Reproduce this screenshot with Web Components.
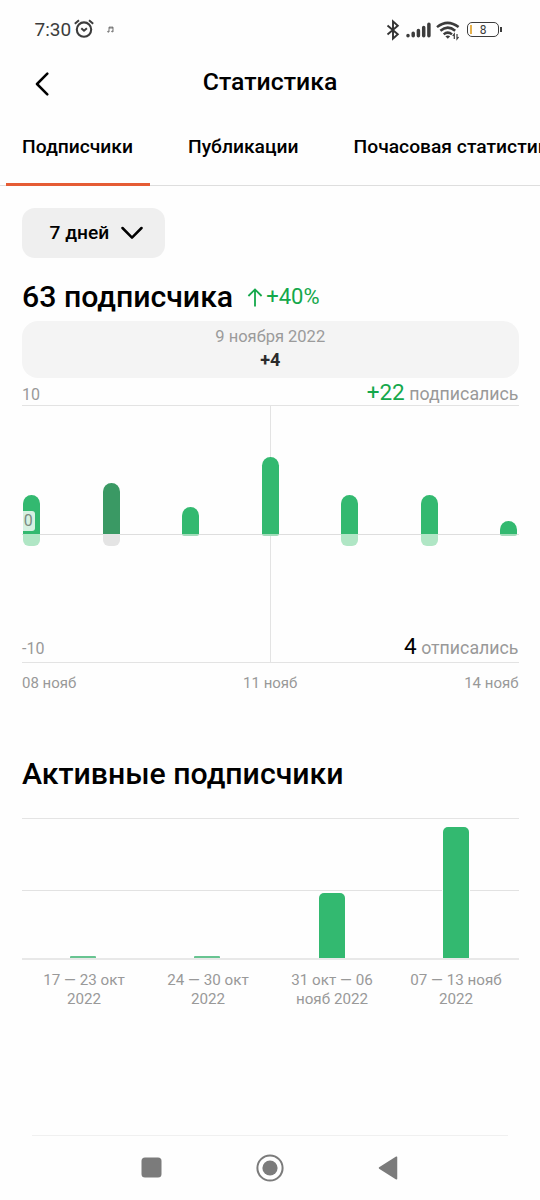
<!DOCTYPE html>
<html lang="ru">
<head>
  <meta charset="utf-8">
  <title>Статистика</title>
  <style>
    body {
      margin: 0;
      background: #fefefe;
      color: #000;
      font-family: Roboto, sans-serif;
    }
  </style>
</head>
<body>
  <stats-screen></stats-screen>

  <script>
    class BaseElement extends HTMLElement {
      shadowRoot = this.attachShadow({ mode: 'open' });

      connectedCallback() {
        this.shadowRoot.innerHTML = `<style>${this.getStyles()}</style>${this.getMarkup()}`;
      }
    }

    class StatusBar extends BaseElement {
      getMarkup() {
        return `
          <span class="time">7:30</span>
          <svg class="alarm" width="20" height="20" viewBox="0 0 20 20" fill="none" stroke="#3c3c3c">
            <circle cx="10" cy="10.6" r="7.2" stroke-width="2.1"/>
            <path d="M7.3 9.3l2.7 2.4 2.9-2.4" stroke-width="2"/>
            <path d="M.8 4.8L5 1.3M15 1.3l4.2 3.5" stroke-width="2"/>
          </svg>
          <svg class="note" width="7" height="7" viewBox="0 0 7 7" fill="none" stroke="#555" stroke-width=".8">
            <path d="M2 5.6V1.1h4v4.3M2 2h4"/>
            <ellipse cx="1.3" cy="5.7" rx=".7" ry=".5"/>
            <ellipse cx="5.3" cy="5.4" rx=".7" ry=".5"/>
          </svg>
          <svg class="bluetooth" width="14" height="20" viewBox="0 0 14 20" fill="none" stroke="#333" stroke-width="1.9">
            <path d="M1.5 5.5l10.3 8.8L7 18.6V1.4l4.8 4.4L1.5 14.4"/>
          </svg>
          <svg class="signal" width="25" height="16" viewBox="0 0 25 16" stroke="#3c3c3c" stroke-width="3.5" stroke-linecap="round">
            <path d="M2 13.8v-.2M7.2 13.8v-2.6M12.4 13.8V8.4M17.7 13.8V5.4M22.9 13.8V2.2"/>
          </svg>
          <svg class="wifi" width="24" height="19" viewBox="0 0 24 19" fill="none" stroke="#3c3c3c" stroke-width="2.5">
            <path d="M1 6.1q10.5-8.5 21.6 0M4.4 9.8q7.3-6.3 14.8 0M7.7 13.4q4-3.5 8.3 0"/>
            <path d="M9.4 15.2q2.4-1.6 4.8 0l-2.4 2.6z" fill="#3c3c3c" stroke="none"/>
            <path d="M18.3 18v-5l-1.6 2M21 13v5l1.6-2" stroke-width="1.2"/>
          </svg>
          <span class="battery"><i></i><b>8</b></span>
        `;
      }

      getStyles() {
        return `
          :host {
            display: flex;
            align-items: center;
            box-sizing: border-box;
            height: 60px;
            padding: 0 41px 1px 34.5px;
            color: #3c3c3c;
          }
          svg { flex: none; overflow: visible; }
          .time { padding-top: 1px; font-size: 19px; line-height: 20px; }
          .alarm { margin: 0 0 1px 3px; }
          .note { margin-left: 13px; }
          .bluetooth { margin: 0 6.5px 0 auto; }
          .wifi { margin: 2px 7px 0 5px; }
          .battery {
            position: relative;
            box-sizing: border-box;
            width: 32px;
            height: 15px;
            border: 1.5px solid #3c3c3c;
            border-radius: 5px;
            text-align: center;
          }
          .battery::after {
            content: '';
            position: absolute;
            right: -4px;
            top: 4px;
            width: 2px;
            height: 5px;
            background: #3c3c3c;
          }
          .battery i {
            position: absolute;
            left: 2px;
            top: 2px;
            width: 2px;
            height: 9px;
            background: #e5b04c;
          }
          .battery b { display: block; font: 400 12px/14px Roboto, sans-serif; }
        `;
      }
    }

    class AppBar extends BaseElement {
      getMarkup() {
        return `
          <svg width="15" height="24" viewBox="0 0 15 24" fill="none" stroke="#000" stroke-width="2.5" stroke-linecap="round" stroke-linejoin="round">
            <path d="M13.3 1.7L3 12l10.3 10.3"/>
          </svg>
          <h1><slot></slot></h1>
        `;
      }

      getStyles() {
        return `
          :host {
            display: grid;
            grid-template-columns: 15px 1fr 15px;
            align-items: center;
            height: 48px;
            padding: 0 34px;
          }
          h1 {
            margin: 0 0 5px;
            font-size: 24.8px;
            line-height: 30px;
            font-weight: 500;
            text-align: center;
          }
        `;
      }
    }

    class TabItem extends BaseElement {
      getMarkup() {
        return '<slot></slot>';
      }

      getStyles() {
        return `
          :host {
            flex: none;
            box-sizing: border-box;
            height: 78px;
            padding: 27px 16.5px 0;
            font-size: 19.25px;
            line-height: 24px;
            font-weight: 500;
            white-space: nowrap;
          }
          :host([active]) {
            border-bottom: 3px solid #e55c34;
          }
        `;
      }
    }

    class TabBar extends BaseElement {
      getMarkup() {
        return '<slot></slot>';
      }

      getStyles() {
        return `
          :host {
            display: flex;
            gap: 22px;
            height: 78px;
            padding-left: 5.5px;
            overflow: hidden;
            background: linear-gradient(#dedede, #dedede) 0 77px / 100% 1px no-repeat;
          }
        `;
      }
    }

    class PeriodSelect extends BaseElement {
      getMarkup() {
        return `
          <slot></slot>
          <svg width="22" height="14" viewBox="0 0 22 14" fill="none" stroke="#000" stroke-width="2.5" stroke-linecap="round" stroke-linejoin="round">
            <path d="M1.5 2l9.5 9.6L20.5 2"/>
          </svg>
        `;
      }

      getStyles() {
        return `
          :host {
            display: flex;
            align-items: center;
            justify-content: space-between;
            box-sizing: border-box;
            width: 142.5px;
            height: 49.5px;
            padding: 0 22px 0 27.5px;
            border-radius: 13px;
            background: #efefef;
            font-size: 19.2px;
            line-height: 24px;
            font-weight: 500;
          }
        `;
      }
    }

    class SectionTitle extends BaseElement {
      getMarkup() {
        const growth = this.getAttribute('growth');

        return `
          <h2><slot></slot></h2>
          ${growth ? `
            <svg width="16" height="19" viewBox="0 0 16 19" fill="none" stroke="#14a84b" stroke-width="1.8">
              <path d="M8 18.6V1.6M1.4 8L8 1.4 14.6 8"/>
            </svg>
            <span>${growth}</span>
          ` : ''}
        `;
      }

      getStyles() {
        return `
          :host { display: flex; align-items: center; height: 36px; }
          h2 { margin: 0; font-size: 30.25px; line-height: 36px; font-weight: 500; white-space: nowrap; }
          svg { margin-left: 14px; }
          span { margin-left: 3px; font-size: 22px; line-height: 30px; color: #14a84b; }
        `;
      }
    }

    class DayDetails extends BaseElement {
      getMarkup() {
        return `
          <span>${this.getAttribute('date')}</span>
          <b>${this.getAttribute('value')}</b>
        `;
      }

      getStyles() {
        return `
          :host {
            display: flex;
            flex-direction: column;
            align-items: center;
            box-sizing: border-box;
            height: 57.5px;
            padding-top: 4.5px;
            border-radius: 16px;
            background: #f4f4f4;
            font-size: 16.5px;
            line-height: 24px;
            color: #9b9b9b;
          }
          b { font-size: 18px; line-height: 22px; font-weight: 700; color: #2b2b2b; }
        `;
      }
    }

    class DeltaChart extends BaseElement {
      // up / down are bar lengths in pixels from the zero line
      days = [
        { up: 39, down: 12 },
        { up: 51, down: 12, selected: true },
        { up: 26.5, down: 2.5 },
        { up: 77, down: 2.5 },
        { up: 39, down: 12 },
        { up: 39, down: 12 },
        { up: 13, down: 2.5 },
      ];

      getMarkup() {
        const bars = this.days.map(({ up, down, selected }) => `
          <div class="day ${selected ? 'selected' : ''}">
            <div class="half"><div class="up" style="height: ${up}px"></div></div>
            <div class="down ${down < 5 ? 'short' : ''}" style="height: ${down}px"></div>
          </div>
        `).join('');

        return `
          <div class="legend top">
            <span>10</span>
            <span class="total"><em class="plus">+22</em> подписались</span>
          </div>
          <div class="plot">
            <div class="middle"></div>
            <div class="zero-line"></div>
            <div class="bars">${bars}</div>
            <span class="zero">0</span>
            <div class="legend bottom">
              <span>-10</span>
              <span class="total"><em>4</em> отписались</span>
            </div>
          </div>
          <div class="dates"><span>08 нояб</span><span>11 нояб</span><span>14 нояб</span></div>
        `;
      }

      getStyles() {
        return `
          :host { display: block; color: #999; }
          .legend {
            display: flex;
            justify-content: space-between;
            align-items: baseline;
            font-size: 16px;
            line-height: 26px;
          }
          .total { font-size: 17.75px; }
          em { font-style: normal; font-size: 22.5px; color: #000; }
          .plus { color: #14a84b; }
          .top { height: 26.5px; line-height: 28px; }
          .plot {
            position: relative;
            box-sizing: border-box;
            height: 258px;
            border: solid #e3e3e3;
            border-width: 1px 0;
          }
          .middle, .zero-line, .zero, .bottom { position: absolute; }
          .middle { left: 247.5px; top: 0; width: 1px; height: 100%; background: #e3e3e3; }
          .zero-line { left: 0; right: 0; top: 128px; height: 1px; background: #dedede; }
          .bars {
            position: relative;
            display: flex;
            justify-content: space-between;
            height: 100%;
            padding: 0 1.2px 0 1.4px;
          }
          .day { width: 17px; }
          .half { display: flex; align-items: flex-end; height: 128px; }
          .up { width: 100%; border-radius: 8.5px 8.5px 0 0; background: #33b970; }
          .down { border-radius: 0 0 6px 6px; background: #b0e6c5; }
          .short { border-radius: 0 0 2px 2px; background: #a3dcba; }
          .selected .up { background: #3a9964; }
          .selected .down { background: #e4e4e4; }
          .zero {
            left: 0;
            top: 105px;
            width: 12.5px;
            height: 20px;
            border-radius: 0 3px 3px 0;
            background: rgba(255, 255, 255, .8);
            font-size: 16px;
            line-height: 20px;
            text-align: center;
            color: #7b8a80;
          }
          .bottom { left: 0; right: 0; bottom: 0; }
          .dates {
            display: flex;
            justify-content: space-between;
            padding-top: 10.5px;
            font-size: 15px;
            line-height: 20px;
          }
        `;
      }
    }

    class ActiveChart extends BaseElement {
      weeks = [
        { label: '17 — 23 окт<br>2022', height: 2 },
        { label: '24 — 30 окт<br>2022', height: 2 },
        { label: '31 окт — 06<br>нояб 2022', height: 65 },
        { label: '07 — 13 нояб<br>2022', height: 131 },
      ];

      getMarkup() {
        const bars = this.weeks.map(({ height }) => `
          <div class="bar ${height < 5 ? 'low' : ''}" style="height: ${height}px"></div>
        `).join('');
        const labels = this.weeks.map(({ label }) => `<div class="label">${label}</div>`).join('');

        return `<div class="plot">${bars}</div><div class="labels">${labels}</div>`;
      }

      getStyles() {
        return `
          :host { display: block; }
          .plot {
            display: flex;
            align-items: flex-end;
            justify-content: space-between;
            box-sizing: border-box;
            height: 142px;
            padding: 0 49.5px 0 48.2px;
            border-top: 1px solid #e4e4e4;
            border-bottom: 2px solid #e8e8e8;
            background: linear-gradient(#e2e2e2, #e2e2e2) 0 71px / 100% 1px no-repeat;
          }
          .bar {
            width: 26px;
            border-radius: 5px 5px 0 0;
            background: #33b970;
            box-shadow: -1px 0 #fefefe, 1px 0 #fefefe;
          }
          .low { border-radius: 1px 1px 0 0; background: #68c491; }
          .labels { display: grid; grid-template-columns: repeat(4, 124px); }
          .label {
            padding-top: 10.5px;
            font-size: 15.2px;
            line-height: 19.5px;
            text-align: center;
            white-space: nowrap;
            color: #999;
          }
        `;
      }
    }

    class NavigationBar extends BaseElement {
      getMarkup() {
        return `
          <svg width="21" height="21" viewBox="0 0 21 21" fill="#7b7b7b"><rect x=".5" y=".5" width="20" height="20" rx="3.5"/></svg>
          <svg width="28" height="28" viewBox="0 0 28 28" fill="#7b7b7b">
            <circle cx="14" cy="14" r="12.6" fill="none" stroke="#7b7b7b" stroke-width="2"/>
            <circle cx="14" cy="14" r="7.6"/>
          </svg>
          <svg width="20" height="24" viewBox="0 0 20 24" fill="#7b7b7b" stroke="#7b7b7b" stroke-width="1.5" stroke-linejoin="round">
            <path d="M1.5 12L18.5 1.2v21.6z"/>
          </svg>
        `;
      }

      getStyles() {
        return `
          :host {
            display: flex;
            align-items: center;
            justify-content: space-between;
            box-sizing: border-box;
            height: 65px;
            margin: auto 32px 0;
            padding: 0 110px 1px 108.5px;
            border-top: 1px solid #f0f0f0;
          }
        `;
      }
    }

    class StatsScreen extends BaseElement {
      getMarkup() {
        return `
          <status-bar></status-bar>
          <app-bar>Статистика</app-bar>
          <tab-bar>
            <tab-item active>Подписчики</tab-item>
            <tab-item>Публикации</tab-item>
            <tab-item>Почасовая статистика</tab-item>
          </tab-bar>
          <main>
            <period-select>7 дней</period-select>
            <section-title class="subscribers" growth="+40%">63 подписчика</section-title>
            <day-details date="9 ноября 2022" value="+4"></day-details>
            <delta-chart></delta-chart>
            <section-title class="active">Активные подписчики</section-title>
            <active-chart></active-chart>
          </main>
          <navigation-bar></navigation-bar>
        `;
      }

      getStyles() {
        return `
          :host {
            display: flex;
            flex-direction: column;
            width: 540px;
            height: 1200px;
            overflow: hidden;
          }
          main { padding: 22px 21.5px 0 22px; }
          .subscribers { margin: 21.5px 0 5.5px; }
          .active { margin: 62.5px 0 26.5px; }
        `;
      }
    }

    customElements.define('status-bar', StatusBar);
    customElements.define('app-bar', AppBar);
    customElements.define('tab-item', TabItem);
    customElements.define('tab-bar', TabBar);
    customElements.define('period-select', PeriodSelect);
    customElements.define('section-title', SectionTitle);
    customElements.define('day-details', DayDetails);
    customElements.define('delta-chart', DeltaChart);
    customElements.define('active-chart', ActiveChart);
    customElements.define('navigation-bar', NavigationBar);
    customElements.define('stats-screen', StatsScreen);
  </script>
</body>
</html>
